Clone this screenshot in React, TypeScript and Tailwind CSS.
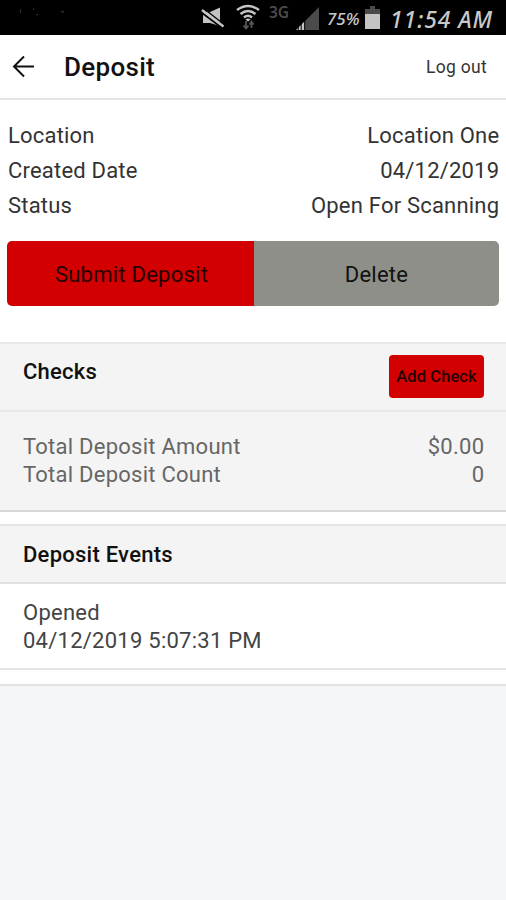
import type { ReactNode } from "react";

interface RowProps {
  label: string;
  value: string;
}

const details: RowProps[] = [
  { label: "Location", value: "Location One" },
  { label: "Created Date", value: "04/12/2019" },
  { label: "Status", value: "Open For Scanning" },
];

const totals: RowProps[] = [
  { label: "Total Deposit Amount", value: "$0.00" },
  { label: "Total Deposit Count", value: "0" },
];

const Row = ({ label, value }: RowProps) => (
  <div className="flex justify-between">
    <span>{label}</span>
    <span className="-mr-[0.25px]">{value}</span>
  </div>
);

const SectionTitle = ({ children }: { children: ReactNode }) => (
  <h2 className="text-[22px] leading-7 font-medium tracking-[0.25px] text-[#111]">{children}</h2>
);

const StatusBar = () => (
  <div className="h-[35px] bg-black flex items-start text-[#c8c8c8] overflow-hidden">
    <svg className="shrink-0" width="326" height="35" viewBox="0 0 326 35">
      <g fill="#2c2c2c">
        <path d="M20 9h1v4h-1zM33 8h1v2h-1zM36 14h2v1h-2zM61 11h3v1.500h-3z" />
      </g>
      {/* muted speaker */}
      <path d="M203 12h7l10-4.500V26l-10-3h-7z" fill="#c4c4c4" />
      <path d="M201.500 12.500l21.500 16" stroke="#000" strokeWidth="2" />
      <path d="M202 10l21.500 16.500" stroke="#c4c4c4" strokeWidth="2.400" />
      <path d="M204 8.800l18 14" stroke="#000" strokeWidth="1.200" />
      {/* wifi */}
      <g fill="none" stroke="#c4c4c4" strokeWidth="2.400">
        <path d="M237 10q11-8 22 0M240.500 14q7.500-6 15 0M244 17.500q4-3.500 8 0" />
      </g>
      <path d="M245.500 19.500q2.500-2 5 0l-2.500 2z" fill="#c4c4c4" />
      <g fill="none" stroke="#555" strokeWidth="1.800">
        <path d="M246 21v7M243.500 25.500l2.500 3 2.500-3M251.500 28v-6M249.500 24.500l2-3 2 3" />
      </g>
      <text x="269" y="18" fill="#4b4b4b" fontFamily="Noto Sans, sans-serif" fontWeight="600" fontSize="15.500" textLength="20">3G</text>
      {/* signal */}
      <path d="M296 30L319 7v23z" fill="#4b4b4b" />
      <path d="M296 30L304.500 21.500v8.500z" fill="#c4c4c4" />
      <path d="M298.200 26v4M301.200 22v8M304.700 20v10" stroke="#000" strokeWidth="1" />
    </svg>
    <span className="w-[38px] pt-[9px] pl-[1px] shrink-0 font-[Noto_Sans,sans-serif] italic font-medium text-[17px] leading-[20px] whitespace-nowrap">75%</span>
    <svg className="shrink-0" width="25" height="35" viewBox="0 0 25 35">
      <path d="M1 9h5V6h5v3h5v6H1z" fill="#4b4b4b" />
      <path d="M1 14h15v15H1z" fill="#c4c4c4" />
    </svg>
    <span className="pt-[4px] pl-[1px] font-[Noto_Sans,sans-serif] italic font-medium text-[23px] leading-[30px] whitespace-nowrap tracking-[0.9px]">11:54 AM</span>
  </div>
);

const App = () => {
  return (
    <div className="min-h-[900px] bg-[#f4f6f8] text-[#333] font-[Roboto,sans-serif] text-[22px]">
      <StatusBar />
      <header className="h-[65px] bg-white border-b-2 border-[#e5e5e5] flex items-center pl-3 pr-[19px]">
        <svg width="23" height="23" viewBox="0 0 23 23" fill="none" stroke="#111" strokeWidth="2">
          <path d="M22 11.500H2M12 1.500L2 11.500l10 10" />
        </svg>
        <h1 className="ml-[29px] text-[26px] leading-8 font-medium tracking-[0.3px] text-[#111]">Deposit</h1>
        <button className="ml-auto pt-px text-[17.500px] tracking-[0.300px]">Log out</button>
      </header>

      <main className="bg-white border-b-2 border-[#e3e3e3] h-[586px]">
        <div className="pt-[18px] pl-2 pr-[7px] leading-[35px] tracking-[0.2px]">
          {details.map((row) => (
            <Row key={row.label} {...row} />
          ))}
        </div>
        <div className="mt-[18px] mx-[7px] h-[65px] flex rounded-[5px] overflow-hidden text-[#111] tracking-[0.25px]">
          <button className="flex-1 pt-px pl-[2px] bg-[#d20000] text-[#250000]">Submit Deposit</button>
          <button className="flex-1 pt-px bg-[#8e8f89]">Delete</button>
        </div>

        <section className="mt-[36px] bg-[#f4f4f4] border-t-2 border-b-2 border-t-[#e8e8e8] border-b-[#d9d9d9]">
          <div className="h-[68px] border-b-2 border-[#e8e8e8] flex justify-between items-start pl-[23px] pr-[22px]">
            <div className="pt-[14px]">
              <SectionTitle>Checks</SectionTitle>
            </div>
            <button className="mt-[11px] pt-[2px] w-[95px] h-[43px] rounded-[4px] bg-[#d20000] text-[#250000] text-[16.500px] tracking-[0.100px] font-medium whitespace-nowrap">
              Add Check
            </button>
          </div>
          <div className="h-[98px] pt-[21px] pl-[23px] pr-[22px] leading-7 text-[#666] tracking-[0.25px]">
            {totals.map((row) => (
              <Row key={row.label} {...row} />
            ))}
          </div>
        </section>

        <section className="mt-[12px] border-y-2 border-[#e5e5e5]">
          <div className="h-[58px] pt-[2px] pl-[23px] flex items-center bg-[#f4f4f4] border-b-2 border-[#e0e0e0]">
            <SectionTitle>Deposit Events</SectionTitle>
          </div>
          <div className="h-[84px] pt-[15px] pl-[23px] leading-7 text-[#444] tracking-[0.25px]">
            <p>Opened</p>
            <p>04/12/2019 5:07:31 PM</p>
          </div>
        </section>
      </main>
    </div>
  );
};

export default App;
